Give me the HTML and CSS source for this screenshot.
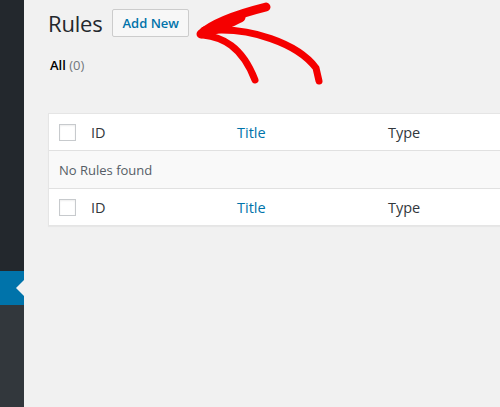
FILE: index.html
```html
<!DOCTYPE html>
<html>
<head>
<meta charset="utf-8">
<link rel="stylesheet" href="styles.css">
</head>
<body>
<div class="layout">
  <aside class="sidebar">
    <div class="menu-top"></div>
    <div class="menu-current"><span class="pointer"></span></div>
    <div class="menu-sub"></div>
  </aside>
  <main class="content">
    <div class="title-bar">
      <h1 class="page-title">Rules</h1>
      <a class="add-new">Add New</a>
    </div>
    <ul class="subsubsub">
      <li><b class="current">All</b> <span class="count">(0)</span></li>
    </ul>
    <div class="list-table">
      <div class="row head">
        <span class="check"></span>
        <span class="col">ID</span>
        <span class="col link">Title</span>
        <span class="col">Type</span>
      </div>
      <div class="row empty">No Rules found</div>
      <div class="row foot">
        <span class="check"></span>
        <span class="col">ID</span>
        <span class="col link">Title</span>
        <span class="col">Type</span>
      </div>
    </div>
  </main>
</div>
<svg class="annotation" width="500" height="407" viewBox="0 0 500 407">
  <g fill="none" stroke="#f50000" stroke-linecap="round" stroke-linejoin="round">
    <path d="M201 34 C 212 24, 234 15, 266 7" stroke-width="9"/>
    <path d="M203 35 C 222 37, 242 46, 255 80" stroke-width="7"/>
    <path d="M206 31 C 250 26, 298 44, 316 68 L 319 81" stroke-width="7"/>
    <path d="M205 32 C 215 30, 225 24, 240 17" stroke-width="11"/>
  </g>
</svg>
</body>
</html>
```
FILE: styles.css
```css
html, body {
  margin: 0;
  padding: 0;
  width: 500px;
  height: 407px;
  overflow: hidden;
  background: #f1f1f1;
  font-family: "Open Sans", "Noto Sans", sans-serif;
  color: #32373c;
}

.layout {
  display: flex;
  height: 407px;
}

.sidebar {
  width: 24px;
  flex: none;
  display: flex;
  flex-direction: column;
}

.menu-top {
  height: 271px;
  background: #23282d;
}

.menu-current {
  height: 34px;
  background: #0073aa;
  position: relative;
}

.pointer {
  position: absolute;
  right: 0;
  top: 9px;
  width: 0;
  height: 0;
  border-top: 8px solid transparent;
  border-bottom: 8px solid transparent;
  border-right: 8px solid #f1f1f1;
}

.menu-sub {
  flex: 1;
  background: #32373c;
}

.content {
  flex: 1;
  min-width: 0;
  padding-left: 24px;
  padding-top: 9px;
}

.title-bar {
  display: flex;
  align-items: center;
  gap: 10px;
  height: 28px;
}

.page-title {
  margin: 0;
  font-size: 22px;
  font-weight: 400;
  color: #23282d;
  line-height: 28px;
  letter-spacing: -0.2px;
}

.add-new {
  display: flex;
  align-items: center;
  box-sizing: border-box;
  height: 28px;
  padding: 0 9px;
  border: 1px solid #cccccc;
  border-radius: 2px;
  background: #f7f7f7;
  color: #0073aa;
  font-size: 13px;
  font-weight: 600;
}

.subsubsub {
  list-style: none;
  margin: 0;
  padding: 0 0 0 2px;
  margin-top: 18px;
  font-size: 13px;
  line-height: 20px;
}

.current {
  color: #000;
  font-weight: 600;
}

.count {
  color: #72777c;
}

.list-table {
  margin-top: 38px;
  background: #fff;
  border: 1px solid #e5e5e5;
  border-right: none;
  box-shadow: 0 1px 1px rgba(0, 0, 0, 0.04);
}

.row {
  display: grid;
  grid-template-columns: 32px 146px 151px 1fr;
  align-items: center;
  padding-left: 10px;
  height: 36px;
  font-size: 14.5px;
}

.row.head {
  border-bottom: 1px solid #e1e1e1;
}

.row.empty {
  display: flex;
  height: 37px;
  background: #f9f9f9;
  font-size: 13px;
  color: #555d66;
  border-bottom: 1px solid #e1e1e1;
}

.check {
  box-sizing: border-box;
  width: 17px;
  height: 17px;
  border: 1px solid #c7cacd;
  background: #fff;
  box-shadow: inset 0 1px 2px rgba(0, 0, 0, 0.07);
}

.col {
  color: #32373c;
}

.col.link {
  color: #0073aa;
}

.annotation {
  position: absolute;
  left: 0;
  top: 0;
  pointer-events: none;
}
```
